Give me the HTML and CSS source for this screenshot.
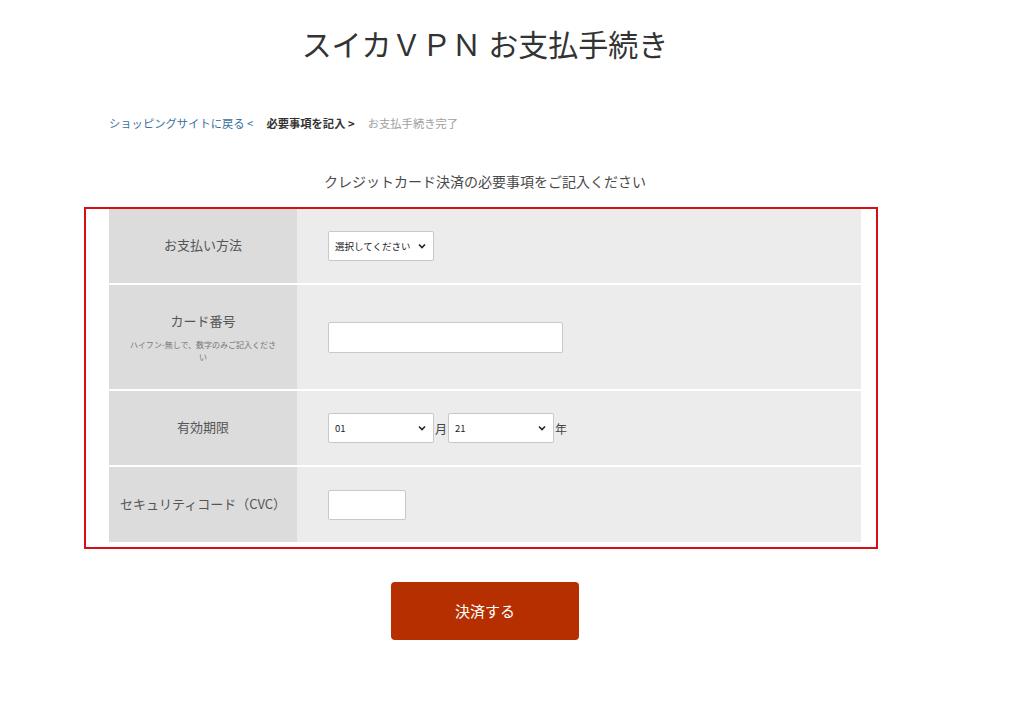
FILE: index.html
```html
<!DOCTYPE html>
<html lang="ja">
<head>
<meta charset="utf-8">
<title>スイカＶＰＮ お支払手続き</title>
<link rel="stylesheet" href="styles.css">
</head>
<body>
<div class="page">
  <h1 class="title">スイカＶＰＮ お支払手続き</h1>
  <nav class="crumbs">
    <a class="crumb-link" href="#">ショッピングサイトに戻る &lt;</a>
    <span class="crumb-current">必要事項を記入 &gt;</span>
    <span class="crumb-next">お支払手続き完了</span>
  </nav>
  <p class="lead">クレジットカード決済の必要事項をご記入ください</p>
  <div class="frame">
    <div class="form-grid">
      <div class="label">お支払い方法</div>
      <div class="value">
        <select class="sel sel-method"><option>選択してください</option></select>
      </div>

      <div class="label label-tall">
        <span>カード番号</span>
        <span class="hint">ハイフン-無しで、数字のみご記入ください</span>
      </div>
      <div class="value">
        <input class="inp inp-card" type="text">
      </div>

      <div class="label">有効期限</div>
      <div class="value">
        <select class="sel sel-date"><option>01</option></select><span class="unit">月</span>
        <select class="sel sel-date"><option>21</option></select><span class="unit">年</span>
      </div>

      <div class="label label-wide">セキュリティコード（CVC）</div>
      <div class="value">
        <input class="inp inp-cvc" type="text">
      </div>
    </div>
  </div>
  <div class="actions">
    <button class="submit" type="button">決済する</button>
  </div>
</div>
</body>
</html>
```

FILE: styles.css
```css
* { box-sizing: border-box; }
html, body { margin: 0; padding: 0; background: #fff; }
body {
  font-family: "Noto Sans CJK JP", "Noto Sans", "DejaVu Sans", sans-serif;
  color: #333;
}
.page {
  width: 970px;
  padding-top: 22px;
}
.title {
  margin: 0;
  font-size: 30px;
  line-height: 42px;
  font-weight: 400;
  text-align: center;
  color: #333;
}
.crumbs {
  margin-top: 50px;
  padding-left: 109px;
  font-size: 11.3px;
  line-height: 18px;
  display: flex;
  gap: 13px;
}
.crumb-link { color: #3b6fa0; text-decoration: none; }
.crumb-current { font-weight: 700; color: #333; }
.crumb-next { color: #a0a0a0; }
.lead {
  margin: 39px 0 0;
  font-size: 14px;
  line-height: 20px;
  text-align: center;
  color: #4a4a4a;
}
.frame {
  margin: 16px 0 0 84px;
  width: 794px;
  border: 2px solid #d60f17;
  padding: 0 15px 5px 23px;
}
.form-grid {
  display: grid;
  grid-template-columns: 188px 1fr;
  grid-template-rows: 74px 104px 74px 75px;
  row-gap: 2px;
  background: #fff;
}
.label {
  background: #dcdcdc;
  display: flex;
  flex-direction: column;
  align-items: center;
  justify-content: center;
  font-size: 13px;
  line-height: 18px;
  color: #555;
  text-align: center;
  padding: 0 17px 2px;
}
.label-tall { padding-bottom: 0; }
.label-wide { padding: 0 4px 2px; white-space: nowrap; }
.hint {
  margin-top: 9px;
  font-size: 8px;
  line-height: 12px;
  color: #777;
}
.value {
  background: #ececec;
  display: flex;
  align-items: center;
  padding-left: 31px;
  font-size: 12px;
  color: #444;
}
.sel {
  appearance: none;
  -webkit-appearance: none;
  height: 30px;
  border: 1px solid #c8c8c8;
  border-radius: 2px;
  background: #fff url("data:image/svg+xml,%3Csvg xmlns='http://www.w3.org/2000/svg' width='8' height='6' viewBox='0 0 8 6'%3E%3Cpath d='M1 1.5l3 3 3-3' fill='none' stroke='%23222' stroke-width='1.6'/%3E%3C/svg%3E") no-repeat right 7px center;
  font-family: inherit;
  font-size: 9.5px;
  color: #222;
  padding: 0 16px 0 6px;
}
.sel-method { width: 106px; }
.sel-date { width: 106px; }
.unit { margin: 0 1px; font-size: 12px; color: #444; }
.inp {
  height: 31px;
  border: 1px solid #c8c8c8;
  border-radius: 2px;
  background: #fff;
  font-family: inherit;
}
.inp-card { width: 235px; }
.inp-cvc { width: 78px; height: 30px; }
.actions {
  display: flex;
  justify-content: center;
  margin-top: 33px;
}
.submit {
  width: 188px;
  height: 58px;
  border: none;
  border-radius: 4px;
  background: #b52f00;
  color: #fff;
  font-family: inherit;
  font-size: 15px;
  padding-bottom: 3px;
}
```
